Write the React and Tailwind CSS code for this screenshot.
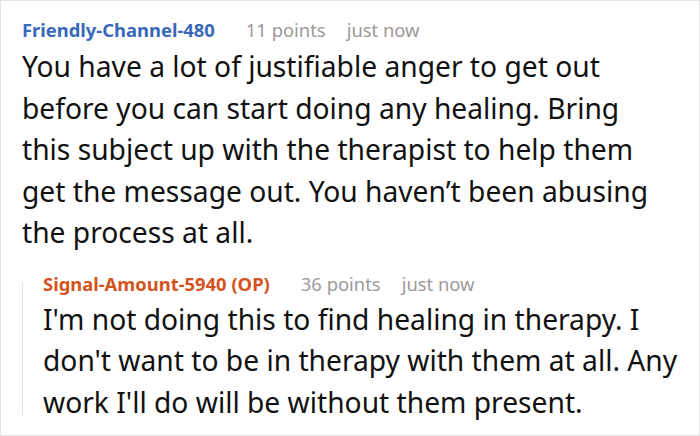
import React from 'react';

const Meta = ({ name, nameColor, points }) => (
  <div className="flex items-baseline text-[18.4px] leading-[24px]">
    <span className={`font-bold ${nameColor}`}>{name}</span>
    <span className="ml-[31px] text-[#9a9a9a]">{points}</span>
    <span className="ml-[21px] text-[#9a9a9a]">just now</span>
  </div>
);

const App = () => {
  return (
    <div
      className="w-[700px] h-[436px] border border-[#e3e3e3] bg-white overflow-hidden pl-[21px] pt-[17px]"
      style={{ fontFamily: '"Noto Sans", "Open Sans", sans-serif' }}
    >
      <Meta name="Friendly-Channel-480" nameColor="text-[#3868b8]" points="11 points" />
      <p className="mt-[4px] text-[28.2px] leading-[41.5px] text-[#111]">
        You have a lot of justifiable anger to get out<br />
        before you can start doing any healing. Bring<br />
        this subject up with the therapist to help them<br />
        get the message out. You haven’t been abusing<br />
        the process at all.
      </p>
      <div className="mt-[18px]">
        <Meta name="Signal-Amount-5940 (OP)" nameColor="text-[#d4531c] pl-[21px]" points="36 points" />
        <div className="flex">
          <div className="w-px bg-[#e3e3e3] mt-[-14px] mb-[8px]" />
          <p className="ml-[20px] mt-[3px] text-[28.2px] leading-[41.5px] text-[#111]">
            I'm not doing this to find healing in therapy. I<br />
            don't want to be in therapy with them at all. Any<br />
            work I'll do will be without them present.
          </p>
        </div>
      </div>
    </div>
  );
};

export default App;
